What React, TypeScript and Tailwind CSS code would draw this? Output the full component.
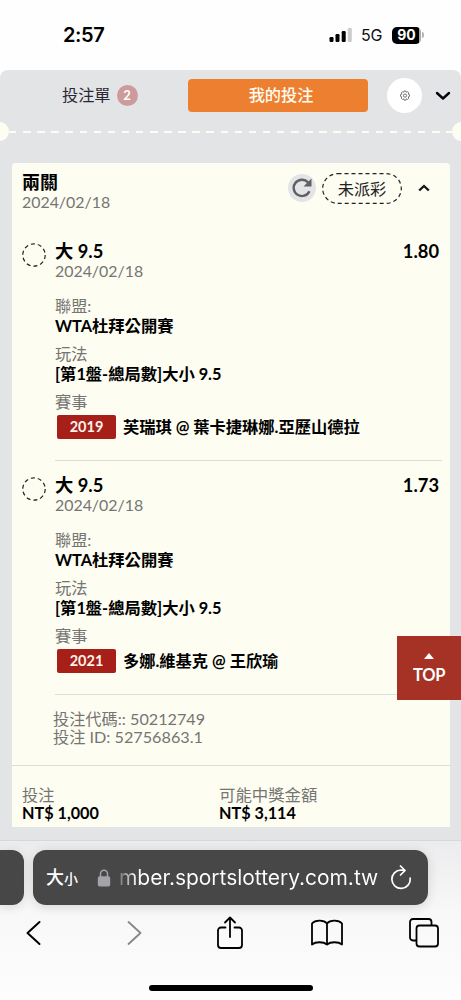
import type { ReactNode } from "react";

type Leg = {
  pick: string;
  odds: string;
  date: string;
  league: string;
  market: string;
  code: string;
  match: string;
};

const LEGS: Leg[] = [
  {
    pick: "大 9.5",
    odds: "1.80",
    date: "2024/02/18",
    league: "WTA杜拜公開賽",
    market: "[第1盤-總局數]大小 9.5",
    code: "2019",
    match: "芙瑞琪 @ 葉卡捷琳娜.亞歷山德拉",
  },
  {
    pick: "大 9.5",
    odds: "1.73",
    date: "2024/02/18",
    league: "WTA杜拜公開賽",
    market: "[第1盤-總局數]大小 9.5",
    code: "2021",
    match: "多娜.維基克 @ 王欣瑜",
  },
];

function StatusBar() {
  return (
    <div className="flex h-[70px] shrink-0 items-center bg-[#fefefe] pl-[63px] pr-[37px] font-['Inter','Liberation_Sans',sans-serif]">
      <span className="flex-1 text-[20px] font-semibold leading-none tracking-[-0.4px] text-black">2:57</span>
      <svg width="24" height="16" viewBox="0 0 24 16" className="mr-[8px]">
        <rect x="0.5" y="10" width="4" height="5" rx="1.2" fill="#000" />
        <rect x="6.5" y="7" width="4" height="8" rx="1.2" fill="#000" />
        <rect x="12.7" y="4" width="4" height="11" rx="1.2" fill="#000" />
        <rect x="18.8" y="1" width="4" height="14" rx="1.2" fill="#ccc" />
      </svg>
      <span className="mr-[9px] w-[22px] whitespace-nowrap text-[16px] leading-none tracking-[-0.3px] text-[#111]">5G</span>
      <div className="flex items-center">
        <span className="flex h-[17px] w-[29px] items-center justify-center rounded-[5px] bg-linear-to-r from-black from-92% to-[#aaa] to-92% text-[14px] font-bold leading-none text-white">
          90
        </span>
        <span className="ml-px h-[6px] w-[2px] rounded-r-full bg-[#b5b5b5]" />
      </div>
    </div>
  );
}

function Tabs() {
  return (
    <div className="flex h-[51px] items-center">
      <div className="flex w-[188px] items-center pl-[62px] text-[16.2px] text-[#2b2733]">
        投注單
        <span className="ml-[6px] flex size-[21px] items-center justify-center rounded-full bg-[#cd9b9b] text-[13px] font-bold leading-none text-white">
          2
        </span>
      </div>
      <div className="flex h-[33px] w-[180px] items-center justify-center rounded-[4px] bg-[#ed8030] pl-[6px] text-[16.2px] font-medium text-[#fffdf2]">
        我的投注
      </div>
      <div className="ml-[19px] flex size-[35px] items-center justify-center rounded-full bg-white">
        <svg width="12" height="12" viewBox="0 0 12 12" fill="none" stroke="#555" strokeWidth="0.8">
          <path d="M5.1 1h1.8l.4 1.2 1.2-.5 1.3 1.3-.6 1.2 1.3.5v1.7l-1.3.5.6 1.2-1.3 1.3-1.2-.6-.4 1.3H5.1l-.4-1.3-1.2.6-1.3-1.3.6-1.2-1.3-.5V4.7l1.3-.5-.6-1.2 1.3-1.3 1.2.5z" />
          <circle cx="6" cy="5.6" r="1.6" />
        </svg>
      </div>
      <svg
        width="16"
        height="10"
        viewBox="0 0 16 10"
        className="ml-[13px] mt-px"
        fill="none"
        stroke="#050510"
        strokeWidth="2.4"
        strokeLinecap="round"
        strokeLinejoin="round"
      >
        <path d="M2 2l6 5.5L14 2" />
      </svg>
    </div>
  );
}

function TicketEdge() {
  return (
    <div className="mt-px flex h-[19px] items-center overflow-hidden">
      <span className="-ml-[10px] size-[19px] shrink-0 rounded-full bg-[#fdfdf2]" />
      <span className="h-[2px] flex-1 bg-[repeating-linear-gradient(90deg,#fdfdf2_0_7.5px,transparent_7.5px_14.1px)]" />
      <span className="-mr-[10px] size-[19px] shrink-0 rounded-full bg-[#fdfdf2]" />
    </div>
  );
}

function CardHeader() {
  return (
    <div className="flex h-[77px] items-start pl-[10px]">
      <div className="flex-1 pt-[9px]">
        <div className="h-[21px] text-[18px] font-bold leading-[21px] text-black">兩關</div>
        <div className="h-[18px] text-[15.9px] leading-[18px] text-[#757572]">2024/02/18</div>
      </div>
      <div className="mt-[11px] flex size-[28px] items-center justify-center rounded-full bg-[#e3e4e8]">
        <svg width="20" height="20" viewBox="0 0 20 20">
          <path d="M17.4 13.2A8.2 8.2 0 1 1 16 4.4" fill="none" stroke="#606064" strokeWidth="2.4" />
          <path d="M19.5.5v8h-8z" fill="#606064" />
        </svg>
      </div>
      <svg width="80" height="31" viewBox="0 0 80 31" className="ml-[6px] mt-[10px]">
        <rect x="0.7" y="0.7" width="78.6" height="29.6" rx="14.8" fill="none" stroke="#222" strokeWidth="1.2" strokeDasharray="4 3" />
        <text x="40" y="21.5" textAnchor="middle" fontSize="16.2" fill="#222">
          未派彩
        </text>
      </svg>
      <svg width="12" height="8" viewBox="0 0 12 8" className="ml-[16px] mr-[20px] mt-[21px]" fill="none" stroke="#111" strokeWidth="2.2">
        <path d="M1.2 6.5L6 2l4.8 4.5" />
      </svg>
    </div>
  );
}

function Field({ label, children }: { label: string; children: ReactNode }) {
  return (
    <>
      <div className="h-[20px] text-[16.2px] leading-[20px] text-[#757572]">{label}</div>
      <div className="h-[20px] text-[16.3px] font-bold leading-[20px] text-black">{children}</div>
    </>
  );
}

function LegRow({ leg }: { leg: Leg }) {
  return (
    <div className="flex pl-[10px] pr-[8px]">
      <svg width="24" height="24" viewBox="0 0 24 24" className="mt-[3px] shrink-0">
        <circle cx="12" cy="12" r="11.2" fill="none" stroke="#222" strokeWidth="1.2" strokeDasharray="4 3.04" />
      </svg>
      <div className="ml-[9px] flex-1 border-b border-[#dddeda] pb-[21px]">
        <div className="flex h-[22px] items-center justify-between text-[18.3px] font-bold leading-[22px] text-black">
          <span>{leg.pick}</span>
          <span className="mr-[3px]">{leg.odds}</span>
        </div>
        <div className="h-[18px] text-[15.9px] leading-[18px] text-[#757572]">{leg.date}</div>
        <div className="mt-[16px]">
          <Field label="聯盟:">{leg.league}</Field>
        </div>
        <div className="mt-[8px]">
          <Field label="玩法">{leg.market}</Field>
        </div>
        <div className="mt-[8px] h-[20px] text-[16.2px] leading-[20px] text-[#757572]">賽事</div>
        <div className="mt-[3px] flex h-[24px] items-center whitespace-nowrap">
          <span className="ml-[2px] flex h-[24px] w-[59px] items-center justify-center rounded-[2px] bg-[#a61f18] text-[14.5px] font-bold text-[#fdf3ec]">
            {leg.code}
          </span>
          <span className="ml-[7px] mt-px text-[16.25px] font-bold text-black">{leg.match}</span>
        </div>
      </div>
    </div>
  );
}

function BetCard() {
  return (
    <div className="ml-[12px] mt-[22px] h-[664px] w-[438px] rounded-t-[4px] bg-[#fdfdf2]">
      <CardHeader />
      <div className="flex flex-col gap-[13px]">
        {LEGS.map((leg) => (
          <LegRow key={leg.code} leg={leg} />
        ))}
      </div>
      <div className="h-[71px] border-b border-[#dcdcd8] pl-[41px] pt-[15px] text-[16.2px] leading-[18px] text-[#757572]">
        <div>投注代碼:: 50212749</div>
        <div>投注 ID: 52756863.1</div>
      </div>
      <div className="flex pl-[10px] pt-[20px] text-[16.2px] leading-[18px]">
        <div className="w-[197px]">
          <div className="text-[#757572]">投注</div>
          <div className="font-bold text-black">NT$ 1,000</div>
        </div>
        <div>
          <div className="text-[16.4px] text-[#757572]">可能中獎金額</div>
          <div className="font-bold text-black">NT$ 3,114</div>
        </div>
      </div>
    </div>
  );
}

function BrowserBar() {
  return (
    <div className="h-[160px] shrink-0 border-t border-[#d8d8da] bg-linear-to-b from-[#ececee] via-[#f8f8f8] via-45% to-[#fdfdfd] font-['Inter','Noto_Sans_CJK_TC',sans-serif]">
      <div className="mt-[9px] flex h-[55px]">
        <div className="w-[23.5px] rounded-r-[12px] bg-[#474747] shadow-[0_2px_12px_rgba(0,0,0,0.12)]" />
        <div className="ml-[9.5px] flex w-[395px] items-center rounded-[13px] bg-[#474747] pl-[13px] text-white shadow-[0_2px_12px_rgba(0,0,0,0.14)]">
          <span className="flex w-[51px] items-baseline leading-none">
            <span className="text-[18px] font-medium">大</span>
            <span className="text-[14px] font-medium">小</span>
          </span>
          <svg width="14" height="18" viewBox="0 0 14 18">
            <path d="M3.5 8V4.8a3.5 3.5 0 0 1 7 0V8" fill="none" stroke="#a3a3ab" strokeWidth="1.5" />
            <rect x="0.8" y="7.3" width="12.4" height="10.3" rx="1.8" fill="#a3a3ab" />
          </svg>
          <span className="ml-[8px] w-[260px] whitespace-nowrap bg-linear-to-r from-[#777] to-white to-7% bg-clip-text text-[21px] leading-[28px] tracking-[-0.04px] text-transparent">
            mber.sportslottery.com.tw
          </span>
          <svg
            width="22"
            height="26"
            viewBox="0 0 22 26"
            className="ml-[11px]"
            fill="none"
            stroke="#fff"
            strokeWidth="1.7"
            strokeLinecap="round"
            strokeLinejoin="round"
          >
            <path d="M20.2 13.2A9.2 9.2 0 1 1 11 5l3.5.3" />
            <path d="M10.5 1L15 5.500l-4.500 4.500" />
          </svg>
        </div>
      </div>
      <div className="mt-[10px] flex h-[36px] items-center text-black">
        <svg width="16" height="26" viewBox="0 0 16 26" className="ml-[26px]" fill="none" stroke="#000" strokeWidth="2" strokeLinecap="round" strokeLinejoin="round">
          <path d="M13.5 2l-12 11 12 11" />
        </svg>
        <svg width="16" height="26" viewBox="0 0 16 26" className="ml-[84px]" fill="none" stroke="#878787" strokeWidth="1.8" strokeLinecap="round" strokeLinejoin="round">
          <path d="M2.5 2l12 11-12 11" />
        </svg>
        <svg width="26" height="34" viewBox="0 0 26 34" className="ml-[75px]" fill="none" stroke="#000" strokeWidth="1.8" strokeLinecap="round" strokeLinejoin="round">
          <path d="M8.5 11.5H4a3 3 0 0 0-3 3V29a3 3 0 0 0 3 3h18a3 3 0 0 0 3-3V14.5a3 3 0 0 0-3-3h-4.5" />
          <path d="M13 21V1.5M8 6.5l5-5 5 5" />
        </svg>
        <svg width="34" height="28" viewBox="0 0 34 28" className="ml-[67px]" fill="none" stroke="#000" strokeWidth="1.8" strokeLinejoin="round">
          <path d="M17 4.5C14 1 5.5.5 2 4.5v21c3.5-3 11.5-3 15 0 3.5-3 11.5-3 15 0v-21C28.5.5 20 1 17 4.5zM17 4.5v21" />
        </svg>
        <svg width="32" height="32" viewBox="0 0 32 32" className="ml-[64px]" fill="none" stroke="#000" strokeWidth="1.8">
          <path d="M8.5 23.5H5a3 3 0 0 1-3-3V5a3 3 0 0 1 3-3h15.5a3 3 0 0 1 3 3v3.5" />
          <rect x="8.5" y="8.5" width="21.5" height="21" rx="3" />
        </svg>
      </div>
      <div className="ml-[149px] mt-[34px] h-[6px] w-[164px] rounded-full bg-black" />
    </div>
  );
}

export default function App() {
  return (
    <div className="relative flex h-[1000px] w-[461px] flex-col overflow-hidden bg-[#fefefe] font-['Lato','Noto_Sans_CJK_TC',sans-serif]">
      <StatusBar />
      <div className="h-[770px] shrink-0 rounded-t-[8px] bg-[#e3e4e6]">
        <Tabs />
        <TicketEdge />
        <BetCard />
      </div>
      <button className="absolute right-0 top-[636px] flex h-[64px] w-[64px] flex-col items-center justify-center bg-[#a63125] text-[16.5px] font-bold leading-[20px] tracking-[-0.3px] text-white">
        <svg width="10" height="6" viewBox="0 0 10 6" className="mb-[6px] mt-[2px]">
          <path d="M5 0l5 6H0z" fill="#fff" />
        </svg>
        TOP
      </button>
      <BrowserBar />
    </div>
  );
}
